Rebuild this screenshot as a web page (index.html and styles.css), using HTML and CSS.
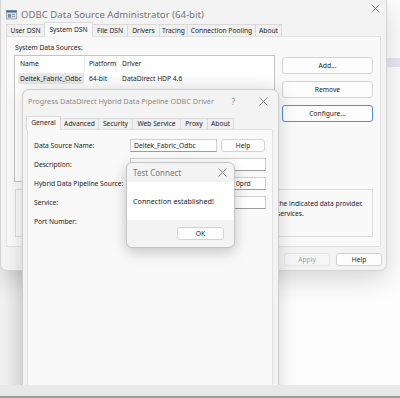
FILE: index.html
```html
<!DOCTYPE html>
<html>
<head>
<meta charset="utf-8">
<title>ODBC Data Source Administrator</title>
<link rel="stylesheet" href="styles.css">
</head>
<body>
<div class="desk">
  <div class="side-band"></div>

  <div class="win main">
    <div class="titlebar">
      <svg class="appicon" width="11" height="11" viewBox="0 0 11 11">
        <rect x="0.5" y="1.5" width="10" height="8.5" fill="#d9dde3" stroke="#7d8590" stroke-width="0.6"/>
        <rect x="0.5" y="1.5" width="10" height="2" fill="#3f6aa0"/>
        <rect x="2" y="5" width="3" height="3.5" fill="#7a8aa0"/>
        <rect x="6" y="5" width="3" height="1" fill="#9aa3ad"/>
        <rect x="6" y="7" width="3" height="1" fill="#9aa3ad"/>
      </svg>
      <span class="title">ODBC Data Source Administrator (64-bit)</span>
      <svg class="close" width="9" height="9" viewBox="0 0 9 9"><path d="M0.5 0.5L8.5 8.5M8.5 0.5L0.5 8.5" stroke="#707070" stroke-width="0.8"/></svg>
    </div>
    <div class="tabs main-tabs">
      <div class="tab">User DSN</div>
      <div class="tab active">System DSN</div>
      <div class="tab">File DSN</div>
      <div class="tab">Drivers</div>
      <div class="tab">Tracing</div>
      <div class="tab">Connection Pooling</div>
      <div class="tab">About</div>
    </div>
    <div class="panel main-panel">
      <div class="dsn-row">
        <div class="dsn-left">
          <div class="label">System Data Sources:</div>
          <div class="listbox">
            <div class="lb-head">
              <div class="col c-name">Name</div>
              <div class="col c-plat">Platform</div>
              <div class="col c-drv">Driver</div>
            </div>
            <div class="lb-row">
              <div class="col c-name"><span class="sel">Deltek_Fabric_Odbc</span></div>
              <div class="col c-plat">64-bit</div>
              <div class="col c-drv">DataDirect HDP 4.6</div>
            </div>
          </div>
        </div>
        <div class="dsn-buttons">
          <div class="btn">Add...</div>
          <div class="btn">Remove</div>
          <div class="btn focus">Configure...</div>
        </div>
      </div>
      <div class="groupbox">
        <div class="gb-text">
          <div class="gb-line">the indicated data provider.</div>
          <div class="gb-line">services.</div>
        </div>
      </div>
    </div>
    <div class="bottom-row">
      <div class="btn small">OK</div>
      <div class="btn small">Cancel</div>
      <div class="btn small disabled">Apply</div>
      <div class="btn small">Help</div>
    </div>
  </div>

  <div class="win prog">
    <div class="titlebar prog-title">
      <span class="title">Progress DataDirect Hybrid Data Pipeline ODBC Driver</span>
      <span class="qmark">?</span>
      <svg class="close" width="9" height="9" viewBox="0 0 9 9"><path d="M0.5 0.5L8.5 8.5M8.5 0.5L0.5 8.5" stroke="#707070" stroke-width="0.8"/></svg>
    </div>
    <div class="tabs prog-tabs">
      <div class="tab active">General</div>
      <div class="tab">Advanced</div>
      <div class="tab">Security</div>
      <div class="tab">Web Service</div>
      <div class="tab">Proxy</div>
      <div class="tab">About</div>
    </div>
    <div class="panel prog-panel">
      <div class="form">
        <div class="flabel">Data Source Name:</div>
        <div class="fctl">
          <div class="input short">Deltek_Fabric_Odbc</div>
          <div class="btn help">Help</div>
        </div>
        <div class="flabel">Description:</div>
        <div class="fctl"><div class="input"></div></div>
        <div class="flabel">Hybrid Data Pipeline Source:</div>
        <div class="fctl"><div class="input tail">0prd</div></div>
        <div class="flabel">Service:</div>
        <div class="fctl"><div class="input"></div></div>
        <div class="flabel">Port Number:</div>
        <div class="fctl"><div class="input port"></div></div>
      </div>
    </div>
  </div>

  <div class="win test">
    <div class="test-title">
      <span class="title">Test Connect</span>
      <svg class="close" width="9" height="9" viewBox="0 0 9 9"><path d="M0.5 0.5L8.5 8.5M8.5 0.5L0.5 8.5" stroke="#707070" stroke-width="0.8"/></svg>
    </div>
    <div class="test-body">Connection established!</div>
    <div class="test-foot">
      <div class="btn ok">OK</div>
    </div>
  </div>
</div>
<div class="taskbar"></div>
</body>
</html>
```
FILE: styles.css
```css
* { box-sizing: border-box; }
html, body { margin: 0; padding: 0; }
body {
  width: 400px;
  height: 398px;
  overflow: hidden;
  background: #fff;
  font-family: "Noto Sans", "Open Sans", sans-serif;
  font-size: 6.7px;
  color: #1b1b1b;
  display: flex;
  flex-direction: column;
}
.desk {
  position: relative;
  height: 385px;
  flex: none;
  background: linear-gradient(to right, #f1f1f1 0, #e6e6e6 22px, #fdfdfd 22px);
  overflow: hidden;
}
.taskbar {
  flex: 1;
  background: #e8e8e8;
  border-bottom: 2px solid #9a9a9a;
}
.side-band {
  position: absolute;
  left: 386px;
  top: 58px;
  width: 14px;
  height: 9px;
  background: #e7e6f6;
}

/* generic windows */
.win { position: absolute; }
.titlebar {
  display: flex;
  align-items: center;
  height: 22px;
  padding-top: 6px;
}
.title { color: #737373; font-size: 8px; white-space: nowrap; }
.close { flex: none; }

.tabs { display: flex; align-items: flex-end; height: 14px; }
.tab {
  height: 12px;
  line-height: 11px;
  display: flex;
  justify-content: center;
  border: 1px solid #dadada;
  border-bottom: none;
  background: #f0f0f0;
  margin-right: -1px;
  white-space: nowrap;
  flex: none;
}
.tab.active {
  height: 15px;
  line-height: 13px;
  background: #f9f9f9;
  position: relative;
  z-index: 1;
  margin-bottom: -1px;
}
.main-tabs .tab:nth-child(1) { width: 39px; }
.main-tabs .tab:nth-child(2) { width: 49px; }
.main-tabs .tab:nth-child(3) { width: 36px; }
.main-tabs .tab:nth-child(4) { width: 33px; }
.main-tabs .tab:nth-child(5) { width: 29px; }
.main-tabs .tab:nth-child(6) { width: 69px; }
.main-tabs .tab:nth-child(7) { width: 27px; }
.panel {
  background: #f9f9f9;
  border: 1px solid #e1e1e1;
}

.btn {
  display: flex;
  align-items: center;
  justify-content: center;
  background: #fdfdfd;
  border: 1px solid #d3d3d3;
  border-radius: 3px;
  white-space: nowrap;
}
.btn.focus { border-color: #4f8fd6; }
.btn.disabled { color: #a3a3a3; background: #f6f6f6; border-color: #e6e6e6; }

/* main window */
.main {
  left: 0;
  top: 0;
  width: 387px;
  height: 271px;
  background: #f3f3f3;
  border: 1px solid #d4d4d4;
  border-top: none;
  border-radius: 0 0 7px 7px;
  box-shadow: 0 8px 26px rgba(0, 0, 0, 0.16);
  display: flex;
  flex-direction: column;
}
.main .titlebar { padding-left: 5px; }
.main .title { font-size: 9.6px; }
.appicon { margin-right: 4px; flex: none; }
.main .close { margin-left: auto; margin-right: 6px; margin-top: -12px; }
.main .tabs { padding-left: 5px; }
.main-panel {
  margin: 0 5px;
  height: 211px;
  padding: 6px 0 0 8px;
}
.dsn-row { display: flex; }
.dsn-left { width: 261px; margin-left: -1px; }
.label { height: 10px; line-height: 10px; padding-left: 1px; }
.listbox {
  margin-top: 2px;
  height: 127px;
  background: #fff;
  border: 1px solid #c4c4c4;
}
.lb-head, .lb-row { display: flex; }
.lb-head { height: 16px; align-items: center; }
.lb-head .col { border-right: 1px solid #ececec; height: 16px; line-height: 16px; }
.lb-row { height: 12px; line-height: 11px; margin-top: 1px; }
.col { white-space: nowrap; }
.c-name { width: 70px; padding-left: 5px; }
.c-plat { width: 32px; padding-left: 4px; }
.c-drv { padding-left: 5px; }
.lb-head .c-drv { border-right: none; }
.sel { background: #e9e9e9; padding: 0 2px; margin-left: -2px; display: inline-block; }
.dsn-buttons {
  width: 91px;
  margin-left: 7px;
  margin-top: 14px;
  display: flex;
  flex-direction: column;
  gap: 7px;
}
.dsn-buttons .btn { height: 17px; }
.groupbox {
  margin-top: 7px;
  width: 358px;
  height: 48px;
  border: 1px solid #dcdcdc;
  padding: 9px 0 0 261px;
}
.gb-line { white-space: nowrap; line-height: 10px; }
.bottom-row {
  display: flex;
  justify-content: flex-end;
  gap: 6px;
  margin-top: 6px;
  padding-right: 4px;
}
.btn.small { width: 46px; height: 13px; }

/* progress dialog */
.prog {
  left: 22px;
  top: 89px;
  width: 257px;
  height: 320px;
  background: #f3f3f3;
  border: 1px solid #cdcdcd;
  border-radius: 7px 7px 0 0;
  box-shadow: 0 0 18px rgba(0, 0, 0, 0.17);
}
.prog-title { padding-top: 0; padding-left: 5px; }
.prog-title .title { color: #8a8a8a; font-size: 7.3px; }
.qmark { margin-left: auto; color: #8a8a8a; font-size: 8px; margin-right: 24px; }
.prog-title .close { margin-right: 10px; }
.prog-tabs { margin-top: 4px; padding-left: 3px; height: 13px; }
.prog-tabs .tab { height: 11px; line-height: 10px; }
.prog-tabs .tab.active { height: 14px; line-height: 12px; }
.prog-tabs .tab:nth-child(1) { width: 35px; }
.prog-tabs .tab:nth-child(2) { width: 39px; }
.prog-tabs .tab:nth-child(3) { width: 35px; }
.prog-tabs .tab:nth-child(4) { width: 49px; }
.prog-tabs .tab:nth-child(5) { width: 28px; }
.prog-tabs .tab:nth-child(6) { width: 27px; }
.prog-panel {
  margin: 0 5px 0 4px;
  height: 300px;
  padding: 9px 0 0 6px;
}
.form {
  display: grid;
  grid-template-columns: 96px 136px;
  grid-auto-rows: 13px;
  row-gap: 6px;
}
.flabel { line-height: 13px; white-space: nowrap; }
.fctl { display: flex; gap: 4px; }
.input {
  flex: 1;
  background: #fff;
  border: 1px solid #cfcfcf;
  border-bottom-color: #9c9c9c;
  padding-left: 3px;
  line-height: 11px;
  white-space: nowrap;
  overflow: hidden;
}
.input.tail { padding-left: 105px; }
.input.short { flex: none; width: 87px; }
.input.port { flex: none; width: 60px; }
.btn.help { width: 44px; }

/* test connect */
.test {
  left: 126px;
  top: 162px;
  width: 109px;
  height: 86px;
  background: #f3f3f3;
  border: 1px solid #c4c4c4;
  border-radius: 6px;
  box-shadow: 0 4px 14px rgba(0, 0, 0, 0.22);
  overflow: hidden;
  display: flex;
  flex-direction: column;
}
.test-title {
  height: 19px;
  display: flex;
  align-items: center;
  padding: 0 7px 0 6px;
}
.test-title .title { color: #7a7a7a; }
.test-title .close { margin-left: auto; }
.test-body {
  height: 38px;
  background: #fff;
  display: flex;
  align-items: center;
  padding-left: 6px;
  white-space: nowrap;
  font-size: 7.2px;
}
.test-foot {
  flex: 1;
  display: flex;
  justify-content: flex-end;
  padding: 7px 10px 0 0;
}
.btn.ok { width: 47px; height: 13px; }
```
